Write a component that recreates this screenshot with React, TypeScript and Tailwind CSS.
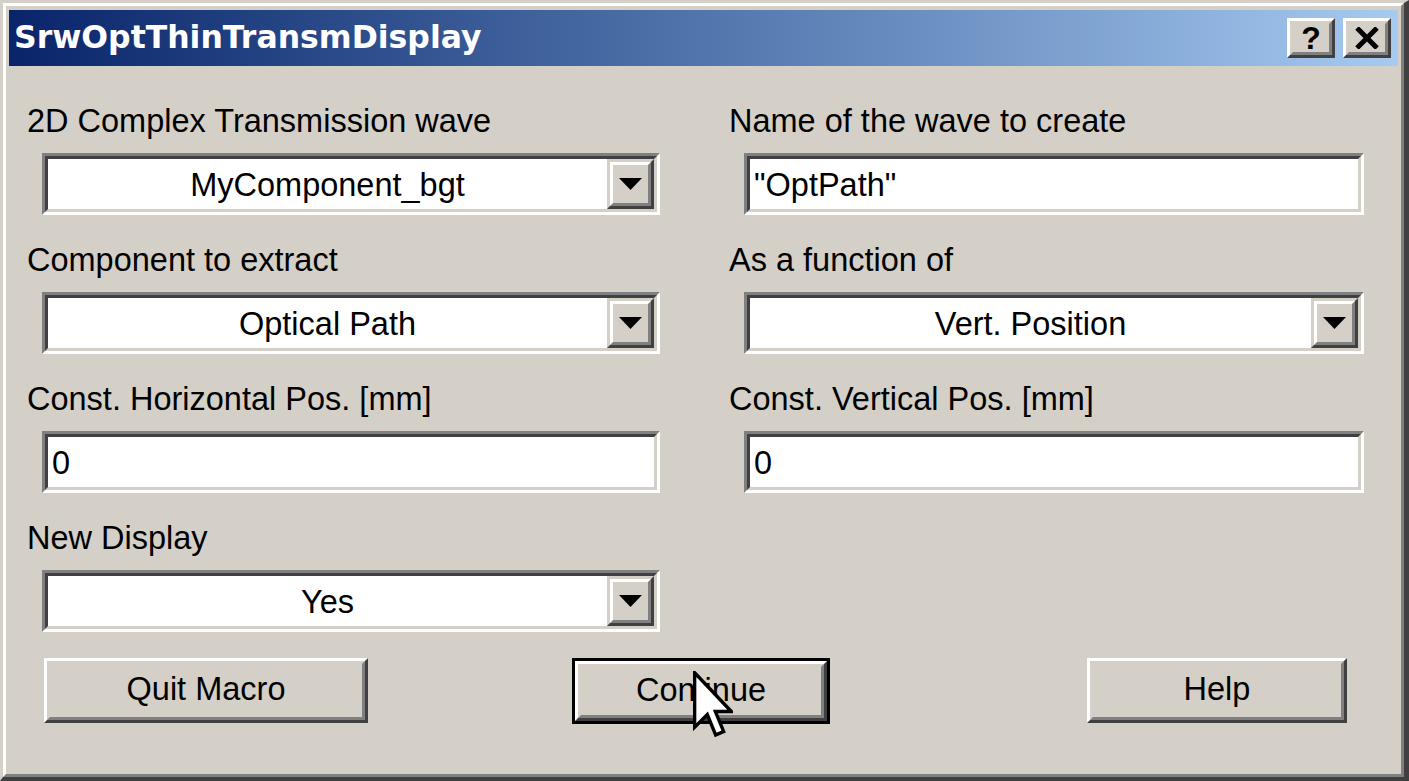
import React from "react";

const F = { fontFamily: '"Liberation Sans", Arial, sans-serif' };

function Sunken({ children }: { children?: React.ReactNode }) {
  return (
    <div className="h-[62px] border-[3px] border-t-[#808080] border-l-[#808080] border-r-white border-b-white">
      <div className="h-full border-[3px] border-t-[#404040] border-l-[#404040] border-r-[#d4d0c8] border-b-[#d4d0c8] bg-white flex">
        {children}
      </div>
    </div>
  );
}

function DropBtn() {
  return (
    <div className="w-[47px] h-full border-[3px] border-t-[#d4d0c8] border-l-[#d4d0c8] border-r-[#404040] border-b-[#404040]">
      <div className="h-full border-[3px] border-t-white border-l-white border-r-[#808080] border-b-[#808080] bg-[#d4d0c8] flex items-center justify-center">
        <svg width="23" height="12" viewBox="0 0 23 12">
          <polygon points="0,0 23,0 11.5,12" fill="#000" />
        </svg>
      </div>
    </div>
  );
}

function Combo({ value }: { value: string }) {
  return (
    <Sunken>
      <div className="flex-1 flex items-center justify-center text-[32.5px] text-black leading-none pt-[2px]">
        {value}
      </div>
      <DropBtn />
    </Sunken>
  );
}

function Input({ value }: { value: string }) {
  return (
    <Sunken>
      <div className="flex-1 flex items-center pl-[4px] text-[32.5px] text-black leading-none pt-[2px]">
        {value}
      </div>
    </Sunken>
  );
}

function Field({ label, children }: { label: string; children: React.ReactNode }) {
  return (
    <div className="flex flex-col">
      <div className="h-[38px] flex items-center text-[32.5px] text-black leading-none whitespace-nowrap">{label}</div>
      <div className="mt-[13px] ml-[15px]">{children}</div>
    </div>
  );
}

function Button({ label, w, def }: { label: string; w: string; def?: boolean }) {
  const inner = (
    <div className="h-full border-[3px] border-t-white border-l-white border-r-[#404040] border-b-[#404040]">
      <div className="h-full border-[3px] border-t-[#d4d0c8] border-l-[#d4d0c8] border-r-[#808080] border-b-[#808080] bg-[#d4d0c8] flex items-center justify-center text-[32.5px] leading-none text-black pb-[2px]">
        {label}
      </div>
    </div>
  );
  if (def) {
    return <div className={`${w} h-[66px] border-[3px] border-black`}>{inner}</div>;
  }
  return <div className={`${w} h-[65px]`}>{inner}</div>;
}

export default function App() {
  return (
    <div className="w-[1409px] h-[781px] bg-[#d4d0c8] relative overflow-hidden" style={F}>
      <div className="w-full h-full border-t-[3px] border-l-[3px] border-r-[5px] border-b-[4px] border-t-[#d4d0c8] border-l-[#d4d0c8] border-r-[#404040] border-b-[#404040]">
        <div className="w-full h-full border-[3px] border-t-white border-l-white border-r-[#808080] border-b-[#808080] p-[3px] pt-[4px] flex flex-col">
          {/* Title bar */}
          <div className="h-[56px] bg-linear-to-r from-[#0a246a] to-[#a6caf0] flex items-center pl-[5px] pr-[7px]">
            <div
              className="text-white font-bold text-[31.5px] leading-none flex-1 whitespace-nowrap"
              style={{ fontFamily: '"DejaVu Sans", Verdana, sans-serif' }}
            >
              SrwOptThinTransmDisplay
            </div>
            <div className="flex gap-[8px]">
              <div className="w-[48px] h-[40px] border-[3px] border-t-white border-l-white border-r-[#404040] border-b-[#404040]">
                <div className="h-full border-[3px] border-t-[#d4d0c8] border-l-[#d4d0c8] border-r-[#808080] border-b-[#808080] bg-[#d4d0c8] flex items-center justify-center">
                  <span className="text-black font-bold text-[32px] leading-none" style={{ fontFamily: '"Liberation Sans", Arial, sans-serif' }}>?</span>
                </div>
              </div>
              <div className="w-[48px] h-[40px] border-[3px] border-t-white border-l-white border-r-[#404040] border-b-[#404040]">
                <div className="h-full border-[3px] border-t-[#d4d0c8] border-l-[#d4d0c8] border-r-[#808080] border-b-[#808080] bg-[#d4d0c8] flex items-center justify-center">
                  <svg width="24" height="22" viewBox="0 0 24 22">
                    <path d="M2 1 L22 21 M22 1 L2 21" stroke="#000" strokeWidth="5" />
                  </svg>
                </div>
              </div>
            </div>
          </div>

          {/* Content */}
          <div className="pl-[18px] pt-[36px]">
            <div className="grid grid-cols-[633px_635px] gap-x-[69px] gap-y-[26px]">
              <Field label="2D Complex Transmission wave">
                <Combo value="MyComponent_bgt" />
              </Field>
              <Field label="Name of the wave to create">
                <Input value={'"OptPath"'} />
              </Field>
              <Field label="Component to extract">
                <Combo value="Optical Path" />
              </Field>
              <Field label="As a function of">
                <Combo value="Vert. Position" />
              </Field>
              <Field label="Const. Horizontal Pos. [mm]">
                <Input value="0" />
              </Field>
              <Field label="Const. Vertical Pos. [mm]">
                <Input value="0" />
              </Field>
              <Field label="New Display">
                <Combo value="Yes" />
              </Field>
            </div>

            <div className="flex mt-[26px] ml-[17px]">
              <Button label="Quit Macro" w="w-[324px]" />
              <div className="ml-[204px]">
                <Button label="Continue" w="w-[258px]" def />
              </div>
              <div className="ml-[257px]">
                <Button label="Help" w="w-[260px]" />
              </div>
            </div>
          </div>
        </div>
      </div>

      {/* Mouse cursor */}
      <svg
        className="absolute left-[693px] top-[671px]"
        width="40"
        height="68"
        viewBox="0 0 12 20"
        preserveAspectRatio="none"
      >
        <path
          d="M0.5 0.5 L0.5 16.5 L4.3 12.8 L6.8 18.8 L9.2 17.8 L6.7 11.9 L11.5 11.9 Z"
          fill="#fff"
          stroke="#000"
          strokeWidth="1"
          strokeLinejoin="miter"
        />
      </svg>
    </div>
  );
}
